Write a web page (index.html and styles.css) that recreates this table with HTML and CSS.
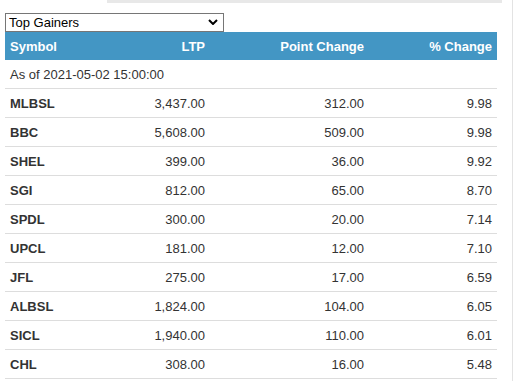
FILE: index.html
```html
<!DOCTYPE html>
<html>
<head>
<meta charset="utf-8">
<link rel="stylesheet" href="styles.css">
</head>
<body>
<div class="page">
  <div class="tabbar"><div class="tabline"></div></div>
  <div class="panel">
    <div class="pickwrap">
      <select class="picker">
        <option>Top Gainers</option>
        <option>Top Losers</option>
      </select>
      <svg class="chev" width="10" height="6" viewBox="0 0 10 6"><path d="M1 1 L5 5 L9 1" fill="none" stroke="#000" stroke-width="2"/></svg>
    </div>
    <table class="movers">
      <colgroup>
        <col class="c1"><col class="c2"><col class="c3"><col class="c4">
      </colgroup>
      <thead>
        <tr><th class="left">Symbol</th><th>LTP</th><th>Point Change</th><th>% Change</th></tr>
      </thead>
      <tbody>
        <tr class="asof"><td colspan="4">As of 2021-05-02 15:00:00</td></tr>
        <tr><td class="sym">MLBSL</td><td>3,437.00</td><td>312.00</td><td>9.98</td></tr>
        <tr><td class="sym">BBC</td><td>5,608.00</td><td>509.00</td><td>9.98</td></tr>
        <tr><td class="sym">SHEL</td><td>399.00</td><td>36.00</td><td>9.92</td></tr>
        <tr><td class="sym">SGI</td><td>812.00</td><td>65.00</td><td>8.70</td></tr>
        <tr><td class="sym">SPDL</td><td>300.00</td><td>20.00</td><td>7.14</td></tr>
        <tr><td class="sym">UPCL</td><td>181.00</td><td>12.00</td><td>7.10</td></tr>
        <tr><td class="sym">JFL</td><td>275.00</td><td>17.00</td><td>6.59</td></tr>
        <tr><td class="sym">ALBSL</td><td>1,824.00</td><td>104.00</td><td>6.05</td></tr>
        <tr><td class="sym">SICL</td><td>1,940.00</td><td>110.00</td><td>6.01</td></tr>
        <tr><td class="sym">CHL</td><td>308.00</td><td>16.00</td><td>5.48</td></tr>
      </tbody>
    </table>
  </div>
</div>
</body>
</html>
```
FILE: styles.css
```css
html, body {
  margin: 0;
  padding: 0;
  background: #fff;
}
body {
  font-family: "Liberation Sans", Arial, sans-serif;
  font-size: 13px;
  color: #333;
}
.page {
  width: 512px;
  height: 381px;
  border-right: 1px solid #e3e3e3;
  overflow: hidden;
}
.tabbar {
  height: 3px;
  padding-left: 107px;
}
.tabline {
  width: 395px;
  height: 3px;
  background: #e8e8e8;
}
.panel {
  padding: 10px 0 0 5px;
}
.pickwrap {
  position: relative;
  width: 219px;
  height: 19px;
}
.picker {
  display: block;
  box-sizing: border-box;
  width: 219px;
  height: 19px;
  margin: 0;
  -webkit-appearance: none;
  appearance: none;
  font-family: "Liberation Sans", Arial, sans-serif;
  font-size: 13px;
  line-height: 17px;
  color: #000;
  border: 1px solid #767676;
  border-radius: 0;
  background: #fff;
  padding: 0 0 0 3px;
}
.chev {
  position: absolute;
  left: 203px;
  top: 6px;
  pointer-events: none;
}
.movers {
  border-collapse: separate;
  border-spacing: 0;
  width: 492px;
  table-layout: fixed;
}
.c1 { width: 100px; }
.c2 { width: 105px; }
.c3 { width: 159px; }
.c4 { width: 128px; }
.movers th {
  box-sizing: border-box;
  background: #4396c4;
  color: #fff;
  font-weight: bold;
  height: 28px;
  padding: 0 5px;
  text-align: right;
  vertical-align: middle;
}
.movers th.left {
  text-align: left;
}
.movers td {
  box-sizing: border-box;
  height: 29px;
  padding: 0 5px;
  text-align: right;
  vertical-align: middle;
  border-bottom: 1px solid #ddd;
  white-space: nowrap;
}
.movers td.sym {
  text-align: left;
  font-weight: bold;
}
.movers .asof td {
  text-align: left;
  font-weight: normal;
}
```
